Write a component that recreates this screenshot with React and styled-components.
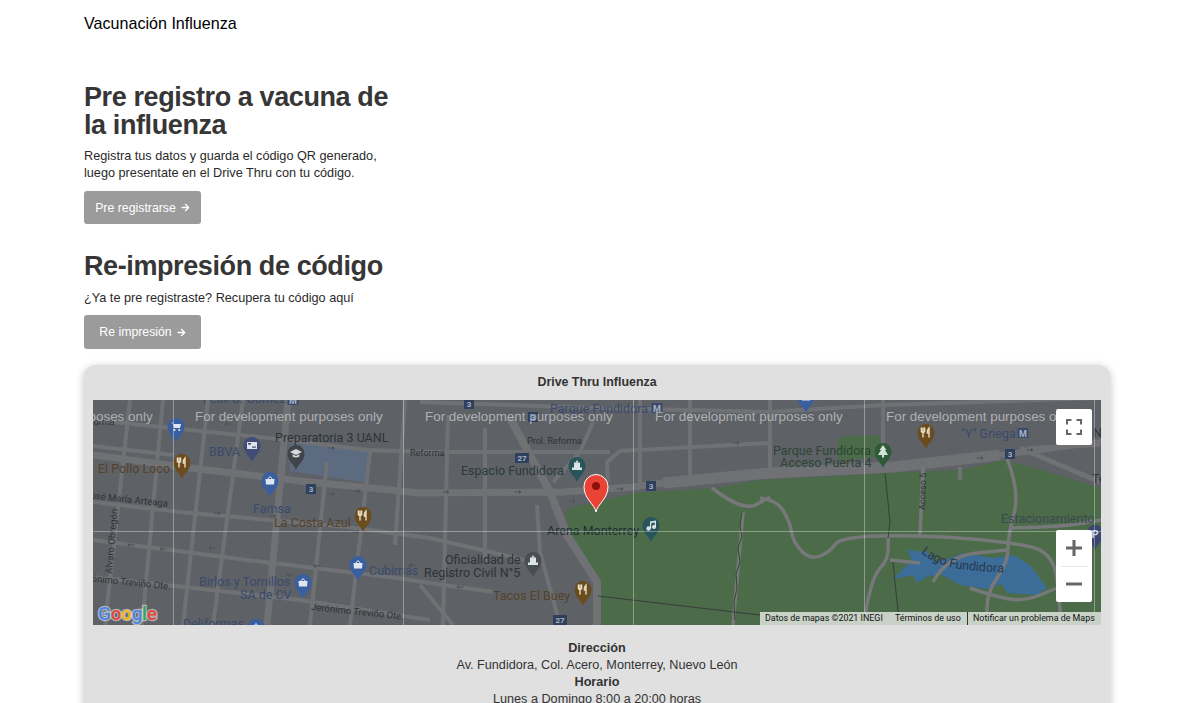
import React from "react";
import styled, { createGlobalStyle } from "styled-components";
import { FaArrowRight } from "react-icons/fa";

const GlobalStyle = createGlobalStyle`
  html, body {
    margin: 0;
    padding: 0;
    height: 703px;
    overflow: hidden;
    background: #fff;
    font-family: "Liberation Sans", Arial, sans-serif;
  }
`;

const Page = styled.div`
  height: 703px;
  overflow: hidden;
  padding: 0 84px;
  box-sizing: border-box;
`;

const Navbar = styled.nav`
  height: 47px;
  display: flex;
  align-items: center;
`;

const Brand = styled.span`
  font-size: 16.1px;
  color: #000;
`;

const Section = styled.section`
  width: 330px;
  margin-top: ${(p) => p.$top}px;
`;

const Heading = styled.h2`
  margin: 0;
  font-size: 27px;
  line-height: 28px;
  font-weight: 700;
  letter-spacing: -0.4px;
  color: #363636;
`;

const Lead = styled.p`
  margin: ${(p) => p.$top}px 0 0;
  width: 300px;
  font-size: 12.7px;
  line-height: 17px;
  color: #2a2a2a;
`;

const ActionButton = styled.button`
  display: flex;
  align-items: center;
  justify-content: center;
  gap: 5px;
  width: 117px;
  height: ${(p) => p.$height}px;
  margin-top: ${(p) => p.$top}px;
  padding: 0;
  border: 0;
  border-radius: 3px;
  background: #9b9b9b;
  color: #fff;
  font-family: inherit;
  font-size: 12.3px;
`;

const MapCard = styled.div`
  margin-top: 16px;
  padding: 9px 9px 16px;
  border-radius: 12px;
  background: #e0e0e0;
  box-shadow: 0 2px 9px rgba(0, 0, 0, 0.25);
`;

const CardTitle = styled.div`
  height: 26px;
  line-height: 17px;
  text-align: center;
  font-size: 12.4px;
  font-weight: 700;
  color: #333;
`;

const MapFrame = styled.div`
  position: relative;
  height: 225px;
  overflow: hidden;
  background: #5e6166;
`;

const MapCanvas = styled.svg`
  display: block;
  width: 1008px;
  height: 225px;
  font-family: Roboto, "Liberation Sans", sans-serif;
`;

const ControlBox = styled.div`
  position: absolute;
  right: 9px;
  width: 36px;
  background: #fff;
  border-radius: 2px;
  display: flex;
  flex-direction: column;
  align-items: center;
  justify-content: center;
`;

const FullscreenBox = styled(ControlBox)`
  top: 9px;
  height: 36px;
`;

const ZoomBox = styled(ControlBox)`
  top: 130px;
  height: 72px;
`;

const ZoomSlot = styled.div`
  flex: 1;
  display: flex;
  align-items: center;
  justify-content: center;
`;

const ZoomDivider = styled.div`
  width: 27px;
  height: 1px;
  background: #e6e6e6;
`;

const Attribution = styled.div`
  position: absolute;
  right: 0;
  bottom: 0;
  width: 341px;
  height: 13px;
  box-sizing: border-box;
  padding-left: 5px;
  display: flex;
  align-items: center;
  background: #c8d2c7;
  font-family: Roboto, "Liberation Sans", sans-serif;
  font-size: 8.9px;
  color: #111;
  white-space: nowrap;
`;

const AttributionItem = styled.span`
  width: ${(p) => p.$width}px;
  height: 13px;
  line-height: 13px;
  box-sizing: border-box;
  ${(p) => p.$divided && "border-left: 1px solid #333; padding-left: 5px;"}
`;

const Address = styled.div`
  margin-top: 15px;
  text-align: center;
  font-size: 12.65px;
  line-height: 17px;
  color: #333;
`;

const AddressTitle = styled.div`
  font-weight: 700;
`;

const BLOCK = "#5e6166";
const ROAD = "#707174";
const PARK = "#4b6b49";
const WATER = "#3c6c98";
const PARK_ROAD = "#77787a";
const BLUE = "#3a5f9e";
const BROWN = "#6a4c1e";
const TEAL = "#28545c";
const LABEL_BLUE = "#3a4a6c";
const LABEL_BROWN = "#55422a";
const LABEL_DARK = "#2e3338";

// streets in page coordinates, the group below shifts them into the map
const streets = [
  [4, "93,420 287,440 367,450 430,452 610,452"],
  [7, "93,455 190,468 300,481 420,493 563,492 633,487 663,483"],
  [11, "663,483 770,473 893,467 1000,455"],
  [6, "1000,455 1101,442"],
  [4, "93,502 180,512 347,527 430,538 533,562"],
  [4, "93,540 247,560 397,578 430,583 493,592"],
  [4, "93,577 300,600 430,620"],
  [4, "93,446 173,455"],
  [4, "420,402 600,408 770,412 883,405 1101,398"],
  [4, "130,400 105,625"],
  [4, "163,400 142,625"],
  [4, "208,400 183,625"],
  [4, "243,400 213,625"],
  [7, "288,400 267,625"],
  [4, "327,462 310,625"],
  [4, "370,452 350,625"],
  [4, "405,400 395,545"],
  [4, "448,415 443,625"],
  [4, "485,428 485,562"],
  [4, "420,585 453,625"],
  [8, "510,418 550,492 567,535 597,582 597,625"],
  [4, "537,505 540,552 560,625"],
  [4, "593,422 580,452 553,482"],
  [4, "608,482 607,462 620,451 770,443"],
  [4, "640,400 640,484"],
  [4, "690,400 690,478"],
  [4, "770,400 770,469"],
  [4, "883,400 883,462"],
  [5, "1020,448 1100,482"],
  [4, "1027,448 1100,445"],
  [4, "960,467 960,480"],
];

const parkRoads = [
  "712,488 743,512 770,497",
  "760,498 777,500 790,522 793,542 810,560 830,552 840,537 920,535 1010,542 1053,552 1060,602 1060,625",
  "743,512 733,625",
  "920,535 923,468",
  "1007,458 1020,492 1008,535 1008,562 987,592 987,625",
  "1010,528 1060,527 1101,520",
  "888,538 890,558 873,575 863,625",
  "890,560 920,563",
  "933,582 947,556 1007,550",
  "970,588 990,595 1023,602 1057,588",
];

const trails = [
  "885,473 890,522 888,538",
  "893,562 898,612",
  "598,596 760,615",
];

const labels = [
  { x: 203, y: 403, text: "Félix U. Gómez", color: LABEL_BLUE },
  { x: 275, y: 442, text: "Preparatoria 3 UANL", color: LABEL_DARK },
  { x: 209, y: 456, text: "BBVA", color: LABEL_BLUE },
  { x: 98, y: 473, text: "El Pollo Loco", color: LABEL_BROWN },
  { x: 253, y: 513, text: "Famsa", color: LABEL_BLUE },
  { x: 274, y: 527, text: "La Costa Azul", color: LABEL_BROWN },
  { x: 369, y: 575, text: "Cubimás", color: LABEL_BLUE },
  { x: 199, y: 586, text: "Birlos y Tornillos", color: LABEL_BLUE },
  { x: 240, y: 599, text: "SA de CV", color: LABEL_BLUE },
  { x: 183, y: 628, text: "Deliformas", color: LABEL_BLUE },
  { x: 461, y: 475, text: "Espacio Fundidora", color: "#2a3a40" },
  { x: 550, y: 413, text: "Parque Fundidora", color: LABEL_BLUE },
  { x: 547, y: 535, text: "Arena Monterrey", color: "#1e3034" },
  { x: 445, y: 564, text: "Oficialidad de", color: LABEL_DARK },
  { x: 424, y: 577, text: "Registro Civil N°5", color: LABEL_DARK },
  { x: 493, y: 600, text: "Tacos El Buey", color: LABEL_BROWN },
  { x: 773, y: 455, text: "Parque Fundidora", color: "#2c4634" },
  { x: 780, y: 467, text: "Acceso Puerta 4", color: "#2c4634" },
  { x: 961, y: 438, text: "\"Y\" Griega", color: LABEL_BLUE },
  { x: 1001, y: 523, text: "Estacionamiento", color: "#3b4a52" },
  { x: 1093, y: 437, text: "Na", color: LABEL_DARK },
  { x: 1092, y: 483, text: "Te", color: LABEL_DARK },
];

const smallLabels = [
  { x: 80, y: 425, text: "Reforma", size: 9 },
  { x: 410, y: 456, text: "Reforma", size: 9 },
  { x: 527, y: 444, text: "Prol. Reforma", size: 9 },
  { x: 85, y: 498, text: "José María Arteaga", size: 9.5, rotate: 6 },
  { x: 78, y: 580, text: "Jerónimo Treviño Ote.", size: 9.5, rotate: 6 },
  { x: 311, y: 610, text: "Jerónimo Treviño Ote.", size: 9.5, rotate: 6 },
  { x: 112, y: 574, text: "Alvaro Obregón", size: 9.5, rotate: -85 },
  { x: 925, y: 510, text: "Acceso 5", size: 9, rotate: -88 },
];

const pins = [
  { x: 176, y: 443, color: BLUE, glyph: "cart" },
  { x: 252, y: 462, color: "#414c78", glyph: "card" },
  { x: 296, y: 470, color: "#404448", glyph: "cap" },
  { x: 182, y: 479, color: BROWN, glyph: "fork" },
  { x: 270, y: 497, color: BLUE, glyph: "bag" },
  { x: 363, y: 532, color: BROWN, glyph: "fork" },
  { x: 358, y: 581, color: BLUE, glyph: "bag" },
  { x: 303, y: 599, color: BLUE, glyph: "bag" },
  { x: 256, y: 644, color: BLUE, glyph: "bag" },
  { x: 577, y: 482, color: TEAL, glyph: "museum" },
  { x: 651, y: 542, color: TEAL, glyph: "note" },
  { x: 533, y: 577, color: "#4a4d52", glyph: "museum" },
  { x: 583, y: 606, color: BROWN, glyph: "fork" },
  { x: 806, y: 413, color: BLUE, glyph: "bag" },
  { x: 926, y: 449, color: BROWN, glyph: "fork" },
  { x: 883, y: 468, color: "#2f5a3a", glyph: "tree" },
  { x: 1095, y: 550, color: "#3a4570", glyph: "park" },
];

const shields = [
  { x: 311, y: 489, text: "3" },
  { x: 469, y: 404, text: "3" },
  { x: 522, y: 458, text: "27" },
  { x: 651, y: 486, text: "3" },
  { x: 560, y: 620, text: "27" },
  { x: 1010, y: 454, text: "3" },
  { x: 533, y: 417, text: "3" },
];

const metros = [
  { x: 293, y: 400 },
  { x: 657, y: 408 },
  { x: 1023, y: 433 },
];

const arrows = [
  [148, 417, 180], [228, 424, 180], [331, 448, 0], [331, 494, 0], [357, 491, 0],
  [217, 513, 0], [273, 516, 0], [356, 532, 0], [131, 545, 180], [163, 549, 180],
  [212, 548, 180], [290, 575, 180], [317, 566, 180], [413, 565, 180], [446, 492, 0],
  [518, 492, 0], [572, 501, 0], [620, 489, 0], [736, 443, 0], [980, 458, 0],
  [1030, 450, 0], [450, 576, 180], [460, 587, 180],
];

const googleLetters = [
  ["G", "#4a86e8"],
  ["o", "#e2473a"],
  ["o", "#f2b90f"],
  ["g", "#4a86e8"],
  ["l", "#35a853"],
  ["e", "#e2473a"],
];

// rounds the corners of a point list so the park roads curve like the real ones
function smoothPath(points) {
  const pts = points.split(" ").map((p) => p.split(",").map(Number));
  let d = `M${pts[0][0]} ${pts[0][1]}`;
  for (let i = 1; i < pts.length - 1; i++) {
    const midX = (pts[i][0] + pts[i + 1][0]) / 2;
    const midY = (pts[i][1] + pts[i + 1][1]) / 2;
    d += ` Q${pts[i][0]} ${pts[i][1]} ${midX} ${midY}`;
  }
  const last = pts[pts.length - 1];
  return `${d} L${last[0]} ${last[1]}`;
}

function PinGlyph({ type }) {
  if (type === "fork") {
    return (
      <g stroke="#e8dcc4" strokeWidth="1.4" fill="none" strokeLinecap="round">
        <path d="M-3 -21 V-12 M-4.6 -21 V-17.5 Q-3 -15.5 -1.4 -17.5 V-21" />
        <path d="M3 -12 V-21 Q1 -19 1.3 -16 H3" />
      </g>
    );
  }
  if (type === "bag") {
    return (
      <g fill="#dfe6f2">
        <path d="M-4.5 -18 H4.5 L4 -12.5 H-4 Z" />
        <path d="M-2 -18 Q0 -22.5 2 -18" fill="none" stroke="#dfe6f2" strokeWidth="1" />
      </g>
    );
  }
  if (type === "cart") {
    return (
      <g fill="#dfe6f2">
        <path d="M-5 -20.5 H-3 L-2 -15 H4 L5 -19 H-2.6 Z" />
        <circle cx="-1.5" cy="-13" r="1.1" />
        <circle cx="3.2" cy="-13" r="1.1" />
      </g>
    );
  }
  if (type === "card") {
    return (
      <g>
        <rect x="-5" y="-20" width="10" height="7" fill="#dfe2ea" />
        <rect x="-4" y="-19" width="3" height="1.6" fill="#414c78" />
        <rect x="0" y="-15.5" width="4" height="1.2" fill="#414c78" />
      </g>
    );
  }
  if (type === "cap") {
    return (
      <g fill="#d8dadc">
        <path d="M0 -21 L6 -18 L0 -15 L-6 -18 Z" />
        <path d="M-3.4 -15.8 V-13.5 Q0 -11.5 3.4 -13.5 V-15.8 L0 -14 Z" />
      </g>
    );
  }
  if (type === "museum") {
    return (
      <g fill="#d9e4e4">
        <path d="M0 -22 L1.5 -19.5 H-1.5 Z" />
        <path d="M-3 -19.5 H3 V-14.5 H5 V-12 H-5 V-14.5 H-3 Z" />
      </g>
    );
  }
  if (type === "note") {
    return (
      <g fill="#d9e4e4">
        <circle cx="-2.4" cy="-13.5" r="2.2" />
        <circle cx="3" cy="-15" r="2" />
        <path d="M-1 -14 V-20.5 L5 -21.5 V-15 H3.8 V-19.5 L0.2 -19 V-14 Z" />
      </g>
    );
  }
  if (type === "tree") {
    return <path d="M0 -23 L3.4 -18 H2 L5 -13 H1 V-10.5 H-1 V-13 H-5 L-2 -18 H-3.4 Z" fill="#d5e2d5" />;
  }
  return (
    <text x="0" y="-12.5" textAnchor="middle" fontSize="11" fontWeight="700" fill="#c9cde0">
      P
    </text>
  );
}

function Pin({ x, y, color, glyph }) {
  return (
    <g transform={`translate(${x} ${y})`}>
      <path
        d="M0 0 C-1.5 -5 -8.5 -9 -8.5 -16.5 A8.5 8.5 0 1 1 8.5 -16.5 C8.5 -9 1.5 -5 0 0 Z"
        fill={color}
      />
      <PinGlyph type={glyph} />
    </g>
  );
}

function StreetMap() {
  return (
    <MapCanvas viewBox="0 0 1008 225">
      <g transform="translate(-93 -400)">
        <rect x="93" y="400" width="1008" height="225" fill={BLOCK} />
        <polygon points="290,441 368,449 368,483 290,471" fill="#5c6b80" />
        <polygon
          points="565,512 575,506 597,502 633,493 713,488 760,480 887,473 960,470 1003,460 1035,468 1101,488 1101,625 597,625 597,582 570,535"
          fill={PARK}
        />
        <polygon points="838,437 880,435 880,457 838,460" fill={PARK} />
        {streets.map(([width, points]) => (
          <polyline
            key={points}
            points={points}
            fill="none"
            stroke={ROAD}
            strokeWidth={width}
            strokeLinejoin="round"
          />
        ))}
        <polygon
          points="907,550 927,552 935,562 950,558 963,553 993,558 1013,555 1030,565 1047,588 1037,595 1007,593 1002,584 987,589 960,585 940,574 927,577 917,583 913,575 893,579 907,565 913,562"
          fill={WATER}
        />
        {parkRoads.map((points) => (
          <path
            key={points}
            d={smoothPath(points)}
            fill="none"
            stroke={PARK_ROAD}
            strokeWidth="3.5"
          />
        ))}
        {trails.map((points) => (
          <polyline key={points} points={points} fill="none" stroke="#3a3d3c" strokeWidth="1" />
        ))}
        <path
          d="M742 512 l-2 14 l2 10 l-4 12 l2 14 l-4 12 l1 14 l-3 14 l1 18"
          fill="none"
          stroke="#2f4a30"
          strokeWidth="1"
        />
        {arrows.map(([x, y, rotate]) => (
          <path
            key={`${x}-${y}`}
            transform={`translate(${x} ${y}) rotate(${rotate})`}
            d="M-3.5 -0.6 H1 V-2.2 L3.5 0 L1 2.2 V0.6 H-3.5 Z"
            fill="#505357"
          />
        ))}
        {shields.map((s) => (
          <g key={`${s.x}-${s.y}`}>
            <rect
              x={s.x - (s.text.length > 1 ? 7 : 5)}
              y={s.y - 5}
              width={s.text.length > 1 ? 14 : 10}
              height="10"
              fill="#2f405e"
            />
            <text x={s.x} y={s.y + 3} textAnchor="middle" fontSize="8" fontWeight="700" fill="#aab2c0">
              {s.text}
            </text>
          </g>
        ))}
        {metros.map((m) => (
          <g key={m.x}>
            <rect x={m.x - 5.5} y={m.y - 5} width="11" height="10" rx="1.5" fill="#3a4a6c" />
            <text x={m.x} y={m.y + 3.5} textAnchor="middle" fontSize="9" fontWeight="700" fill="#aab2c0">
              M
            </text>
          </g>
        ))}
        {labels.map((l) => (
          <text key={`${l.text}-${l.x}`} x={l.x} y={l.y} fontSize="12.5" fill={l.color}>
            {l.text}
          </text>
        ))}
        {smallLabels.map((l) => (
          <text
            key={`${l.text}-${l.x}`}
            x={l.x}
            y={l.y}
            fontSize={l.size}
            fill="#2f3236"
            transform={l.rotate ? `rotate(${l.rotate} ${l.x} ${l.y})` : undefined}
          >
            {l.text}
          </text>
        ))}
        <path id="lagoPath" d="M921 553 Q938 566 960 569 T1020 573" fill="none" />
        <text fontSize="12.5" fill="#27384f">
          <textPath href="#lagoPath">Lago Fundidora</textPath>
        </text>
        {pins.map((p) => (
          <Pin key={`${p.x}-${p.y}`} {...p} />
        ))}
        {[173, 403, 633, 864, 1094].map((x) => (
          <line key={x} x1={x + 0.5} x2={x + 0.5} y1="400" y2="625" stroke="rgba(255,255,255,.35)" />
        ))}
        <line x1="93" x2="1101" y1="531.5" y2="531.5" stroke="rgba(255,255,255,.35)" />
        {[-35, 195, 425, 655, 886].map((x) => (
          <text
            key={x}
            x={x}
            y="421"
            fontSize="13.4"
            fontFamily="'Liberation Sans', sans-serif"
            fill="rgba(255,255,255,.5)"
          >
            For development purposes only
          </text>
        ))}
        <text
          x="98"
          y="620"
          fontSize="19"
          fontWeight="500"
          stroke="rgba(255,255,255,.5)"
          strokeWidth="2.5"
          paintOrder="stroke"
          letterSpacing="-0.3"
        >
          {googleLetters.map(([letter, color], i) => (
            <tspan key={i} fill={color}>
              {letter}
            </tspan>
          ))}
        </text>
        <g transform="translate(596 512)">
          <path
            d="M0 0 C-1.5 -8 -12 -13 -12 -25.5 A12 12 0 1 1 12 -25.5 C12 -13 1.5 -8 0 0 Z"
            fill="#ea4335"
            stroke="#fff"
            strokeWidth="1"
          />
          <circle cx="0" cy="-26" r="4" fill="#8e1209" />
        </g>
      </g>
    </MapCanvas>
  );
}

export default function App() {
  return (
    <Page>
      <GlobalStyle />
      <Navbar>
        <Brand>Vacunación Influenza</Brand>
      </Navbar>
      <Section $top={36}>
        <Heading>Pre registro a vacuna de la influenza</Heading>
        <Lead $top={9}>
          Registra tus datos y guarda el código QR generado, luego presentate en el Drive Thru con tu código.
        </Lead>
        <ActionButton $top={9} $height={33}>
          Pre registrarse <FaArrowRight size={9} />
        </ActionButton>
      </Section>
      <Section $top={28}>
        <Heading>Re-impresión de código</Heading>
        <Lead $top={10}>¿Ya te pre registraste? Recupera tu código aquí</Lead>
        <ActionButton $top={8} $height={34}>
          Re impresión <FaArrowRight size={9} />
        </ActionButton>
      </Section>
      <MapCard>
        <CardTitle>Drive Thru Influenza</CardTitle>
        <MapFrame>
          <StreetMap />
          <FullscreenBox>
            <svg width="16" height="16" viewBox="0 0 16 16">
              <path
                d="M1 5.5 V1 H5.5 M10.5 1 H15 V5.5 M15 10.5 V15 H10.5 M5.5 15 H1 V10.5"
                fill="none"
                stroke="#666"
                strokeWidth="2"
              />
            </svg>
          </FullscreenBox>
          <ZoomBox>
            <ZoomSlot>
              <svg width="16" height="16" viewBox="0 0 16 16">
                <path d="M0 8 H16 M8 0 V16" stroke="#666" strokeWidth="3" />
              </svg>
            </ZoomSlot>
            <ZoomDivider />
            <ZoomSlot>
              <svg width="16" height="16" viewBox="0 0 16 16">
                <path d="M0 8 H16" stroke="#666" strokeWidth="3" />
              </svg>
            </ZoomSlot>
          </ZoomBox>
          <Attribution>
            <AttributionItem $width={130}>Datos de mapas ©2021 INEGI</AttributionItem>
            <AttributionItem $width={72}>Términos de uso</AttributionItem>
            <AttributionItem $divided>Notificar un problema de Maps</AttributionItem>
          </Attribution>
        </MapFrame>
        <Address>
          <AddressTitle>Dirección</AddressTitle>
          <div>Av. Fundidora, Col. Acero, Monterrey, Nuevo León</div>
          <AddressTitle>Horario</AddressTitle>
          <div>Lunes a Domingo 8:00 a 20:00 horas</div>
        </Address>
      </MapCard>
    </Page>
  );
}
